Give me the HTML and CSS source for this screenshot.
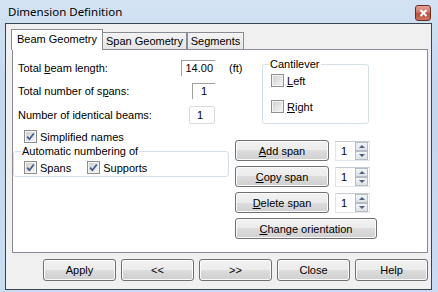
FILE: index.html
```html
<!DOCTYPE html>
<html lang="en">
<head>
  <meta charset="UTF-8" />
  <meta name="viewport" content="width=device-width, initial-scale=1.0"/>
  <title>Dimension Definition</title>
  <link rel="stylesheet" href="styles.css">
</head>
<body>
  <div class="window">
    <div class="titlebar">
      <span class="title">Dimension Definition</span>
      <span class="close-btn">
        <svg width="9" height="8" viewBox="0 0 9 8"><path d="M1.5 1 L7.5 7 M7.5 1 L1.5 7" stroke="#fff" stroke-width="2"/></svg>
      </span>
    </div>

    <div class="client">
      <div class="tabs">
        <div class="tab active">Beam Geometry</div>
        <div class="tab tab-span">Span Geometry</div>
        <div class="tab tab-seg">Segments</div>
      </div>

      <div class="panel">
        <div class="col-left">
          <div class="fields">
            <label>Total <u>b</u>eam length:</label>
            <span class="edit edit-length">14.00</span>
            <span class="unit">(ft)</span>

            <label>Total number of s<u>p</u>ans:</label>
            <span class="edit edit-spans">1</span>
            <span></span>

            <label>Number of identical beams:</label>
            <span class="edit edit-beams">1</span>
            <span></span>
          </div>

          <div class="check-item simplified">
            <span class="check checked"><svg width="9" height="9" viewBox="0 0 9 9"><path d="M1.2 4.6 L3.4 7.2 L7.8 1.4" fill="none" stroke="#3f5a94" stroke-width="1.7"/></svg></span>
            Simplified names
          </div>

          <fieldset class="group numbering">
            <legend>Automatic numbering of</legend>
            <div class="check-line">
              <span class="check-item"><span class="check checked"><svg width="9" height="9" viewBox="0 0 9 9"><path d="M1.2 4.6 L3.4 7.2 L7.8 1.4" fill="none" stroke="#3f5a94" stroke-width="1.7"/></svg></span>Spans</span>
              <span class="check-item"><span class="check checked"><svg width="9" height="9" viewBox="0 0 9 9"><path d="M1.2 4.6 L3.4 7.2 L7.8 1.4" fill="none" stroke="#3f5a94" stroke-width="1.7"/></svg></span>Supports</span>
            </div>
          </fieldset>
        </div>

        <div class="col-right">
          <fieldset class="group cantilever">
            <legend>Cantilever</legend>
            <div class="check-item"><span class="check"></span><u>L</u>eft</div>
            <div class="check-item"><span class="check"></span><u>R</u>ight</div>
          </fieldset>

          <div class="span-actions">
            <div class="span-row">
              <button class="btn btn-span"><u>A</u>dd span</button>
              <div class="spin"><span class="spin-value">1</span><span class="spin-btns"><span class="spin-up"></span><span class="spin-down"></span></span></div>
            </div>
            <div class="span-row">
              <button class="btn btn-span"><u>C</u>opy span</button>
              <div class="spin"><span class="spin-value">1</span><span class="spin-btns"><span class="spin-up"></span><span class="spin-down"></span></span></div>
            </div>
            <div class="span-row">
              <button class="btn btn-span"><u>D</u>elete span</button>
              <div class="spin"><span class="spin-value">1</span><span class="spin-btns"><span class="spin-up"></span><span class="spin-down"></span></span></div>
            </div>
            <button class="btn btn-orient"><u>C</u>hange orientation</button>
          </div>
        </div>
      </div>

      <div class="actions">
        <button class="btn">Apply</button>
        <button class="btn">&lt;&lt;</button>
        <button class="btn">&gt;&gt;</button>
        <button class="btn">Close</button>
        <button class="btn">Help</button>
      </div>
    </div>
  </div>
</body>
</html>
```

FILE: styles.css
```css
* {
  box-sizing: border-box;
}
body {
  margin: 0;
  font-family: 'Liberation Sans', Arial, sans-serif;
  font-size: 11px;
  color: #000;
}
.window {
  width: 438px;
  height: 292px;
  display: flex;
  flex-direction: column;
  padding: 0 6px 2px 5px;
  background: linear-gradient(180deg, #d3e3f4 0%, #c3d7ed 30%, #c9dcf0 100%);
}
.titlebar {
  height: 23px;
  display: flex;
  align-items: flex-start;
  padding-left: 3px;
}
.title {
  font-family: 'Noto Sans', sans-serif;
  font-size: 11.5px;
  margin-top: 4px;
  line-height: 16px;
}
.close-btn {
  margin-left: auto;
  margin-top: 5px;
  margin-right: 1px;
  width: 16px;
  height: 16px;
  border: 1px solid #6d2b24;
  border-radius: 3px;
  background: linear-gradient(180deg, #e4a397 0%, #cf7464 45%, #bb4d3c 55%, #cc7660 100%);
  display: flex;
  align-items: center;
  justify-content: center;
}
.client {
  flex: 1;
  border: 1px solid #3a4350;
  background: #f0f0f0;
  padding: 5px 3px 0 6px;
}

/* tabs */
.tabs {
  display: flex;
  align-items: flex-end;
  height: 20px;
  margin-left: -1px;
}
.tab {
  height: 17px;
  border: 1px solid #898c95;
  border-bottom: none;
  background: linear-gradient(180deg, #f3f3f3, #e5e5e5);
  text-align: center;
  line-height: 16px;
}
.tab.active {
  height: 21px;
  width: 92px;
  margin-bottom: -1px;
  background: #fff;
  position: relative;
  z-index: 1;
  line-height: 18px;
}
.tab-span {
  width: 85px;
  margin-left: -1px;
}
.tab-seg {
  width: 57px;
}

.panel {
  height: 204px;
  border: 1px solid #898c95;
  background: #fff;
  display: grid;
  grid-template-columns: 222px 1fr;
}

/* left column */
.fields {
  display: grid;
  grid-template-columns: 1fr auto 6px;
  grid-template-rows: 16px 16px 18px;
  column-gap: 14px;
  row-gap: 7px;
  align-items: center;
  padding-left: 5px;
  margin-top: 10px;
}
.fields label {
  white-space: nowrap;
}
.edit {
  justify-self: end;
  height: 16px;
  line-height: 15px;
  border-top: 1px solid #a0a0a0;
  border-left: 1px solid #a0a0a0;
}
.edit-length {
  width: 34px;
  text-align: right;
  padding-right: 2px;
}
.edit-spans {
  width: 23px;
  text-align: center;
}
.edit-beams {
  width: 26px;
  height: 18px;
  line-height: 16px;
  padding-left: 7px;
  border: 1px solid #d9d9d9;
  border-radius: 2px;
}
.unit {
  white-space: nowrap;
}
.check-item {
  display: flex;
  align-items: center;
  height: 13px;
  white-space: nowrap;
}
.check {
  width: 13px;
  height: 13px;
  margin-right: 3px;
  border: 1px solid #8e8f8f;
  background: linear-gradient(135deg, #cdcdcd 0%, #f7f7f7 100%);
  box-shadow: inset 0 0 0 1px #f4f4f4;
  display: flex;
  align-items: center;
  justify-content: center;
}
.simplified {
  margin: 6px 0 0 11px;
}
.group {
  margin: 0;
  border: 1px solid #d5dfe5;
  border-radius: 3px;
}
.group legend {
  padding: 0 1px;
  line-height: 13px;
}
.numbering {
  width: 216px;
  margin-top: 2px;
  padding: 0 0 2px 7px;
}
.check-line {
  display: flex;
  gap: 16px;
  margin: 3px 0 0 3px;
}

/* right column */
.cantilever {
  width: 107px;
  margin: 8px 0 0 27px;
  padding: 0 0 10px 6px;
}
.cantilever .check-item {
  margin: 3px 0 0 2px;
}
.cantilever .check-item + .check-item {
  margin-top: 13px;
}
.span-actions {
  margin-top: 16px;
  display: flex;
  flex-direction: column;
  gap: 5px;
}
.span-row {
  display: flex;
  align-items: center;
  gap: 6px;
}
.btn {
  height: 21px;
  padding: 0;
  font: inherit;
  color: #000;
  border: 1px solid #707070;
  border-radius: 3px;
  background: linear-gradient(180deg, #f2f2f2 0%, #ebebeb 50%, #dddddd 50%, #cfcfcf 100%);
  box-shadow: inset 0 0 0 1px #fbfbfb;
}
.btn-span {
  width: 94px;
}
.btn-orient {
  width: 142px;
}
.spin {
  width: 35px;
  height: 20px;
  display: flex;
  background: #fff;
  border: 1px solid #e2e6ea;
  border-top-color: #c6cbd0;
}
.spin-value {
  flex: 1;
  padding-left: 5px;
  line-height: 18px;
}
.spin-btns {
  width: 13px;
  display: flex;
  flex-direction: column;
  margin: 0 1px 0 0;
}
.spin-up,
.spin-down {
  flex: 1;
  border: 1px solid #b5bcc6;
  background: linear-gradient(180deg, #f4f5f7, #dde2e8);
  display: flex;
  align-items: center;
  justify-content: center;
}
.spin-up::after {
  content: '';
  border: 3px solid transparent;
  border-top: none;
  border-bottom: 3px solid #4d6185;
}
.spin-down::after {
  content: '';
  border: 3px solid transparent;
  border-bottom: none;
  border-top: 3px solid #4d6185;
}

/* bottom buttons */
.actions {
  display: flex;
  justify-content: flex-end;
  gap: 5px;
  margin-top: 6px;
}
.actions .btn {
  width: 73px;
  height: 22px;
}
```
